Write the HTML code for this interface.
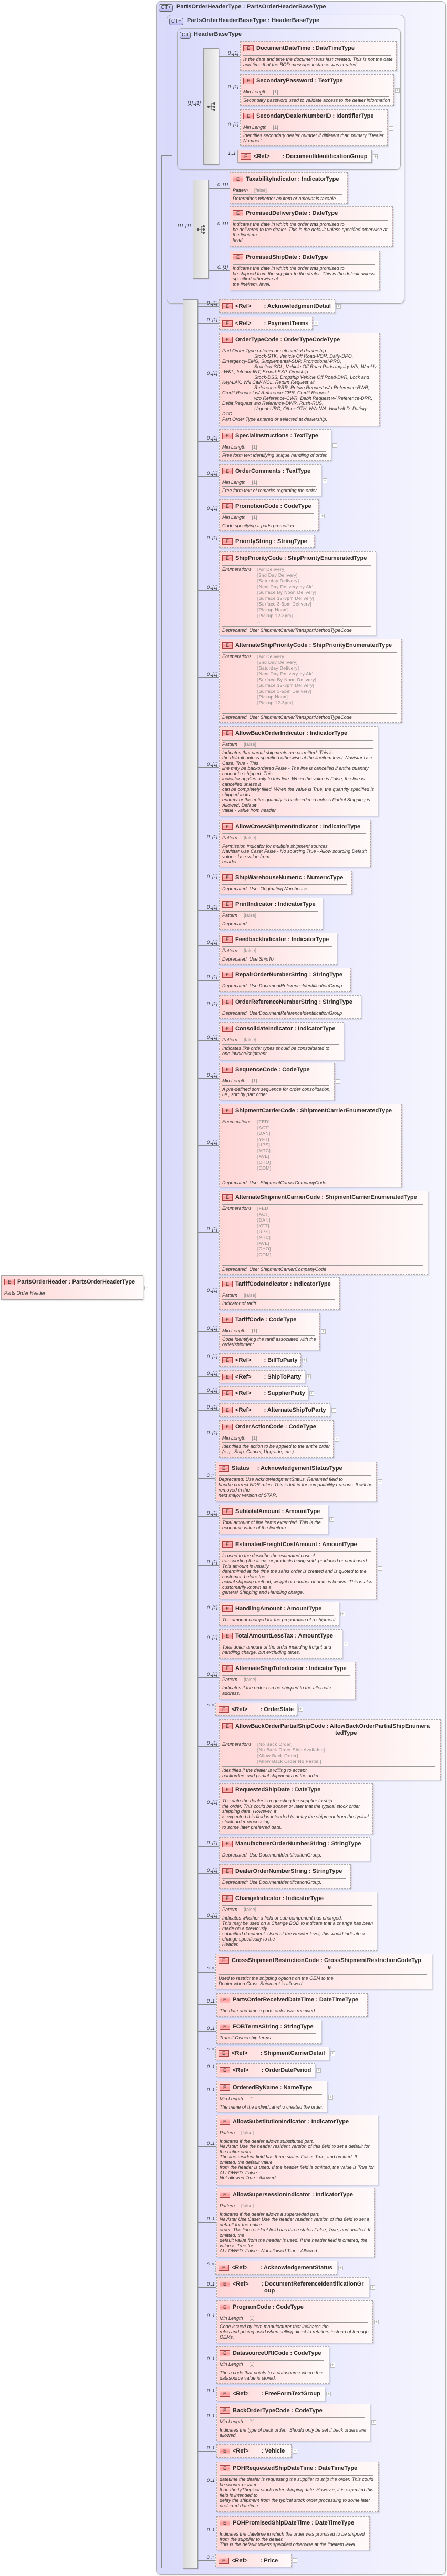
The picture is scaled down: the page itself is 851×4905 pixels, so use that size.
<!DOCTYPE html>
<html><head><meta charset="utf-8">
<style>
body{margin:0;width:851px;height:4905px;position:relative;background:#fff;font-family:"Liberation Sans",Arial,sans-serif;overflow:hidden;color:#222}
.box{position:absolute;box-sizing:border-box;border:1px solid #b0b0b0;border-radius:9px;background:linear-gradient(90deg,#d9d9fb 0%,#e6e6fd 45%,#f6f6ff 100%);box-shadow:1px 1px 2px rgba(0,0,0,.15)}
.ctb{position:absolute;box-sizing:border-box;height:14px;border:1px solid #666;border-radius:4px;background:linear-gradient(#e4e4ff,#b8b8f0);font:10px/12px "Liberation Sans",sans-serif;padding:0 3px;color:#333}
.ctt{position:absolute;font:bold 11px/13px "Liberation Sans",sans-serif;color:#333;white-space:nowrap;letter-spacing:.2px}
.b{position:absolute;box-sizing:border-box;border:1px dashed #a9a9a9;background:linear-gradient(90deg,#ffd6d6 0%,#ffe6e6 45%,#fffafa 100%);box-shadow:2px 2px 2px rgba(0,0,0,.13);overflow:hidden}
.b.s{border-style:solid}
.h{position:relative;height:25px;padding:6px 0 0 30px;box-sizing:border-box;font:bold 11px/13px "Liberation Sans",sans-serif;white-space:nowrap;color:#2a2a2a}
.h2{height:38px}
.e{position:absolute;left:5px;top:6px;width:20px;height:12px;box-sizing:border-box;border:1px solid #a44;background:linear-gradient(#fcc,#f99 55%,#fbb);font:normal 9px/10px "Liberation Sans",sans-serif;text-align:center;color:#333}
.rf{display:inline-block;width:24px}
.r{margin:0 9px 0 5px;border-top:1px solid #999;font:italic 9px/10px "Liberation Sans",sans-serif;padding:2px 0 3px;white-space:nowrap;color:#333}
.r i{font-style:normal;color:#888;margin-left:12px}
.in{padding-left:61px}
.en{display:flex}
.en b{font-weight:normal;width:67px}
.en span{font:normal 8.5px/11px "Liberation Sans",sans-serif;color:#888;letter-spacing:.4px}
.c{position:absolute;height:1px;background:#8a8a8a}
.v{position:absolute;width:1px;background:#8a8a8a}
.k{position:absolute;font:italic 9px/10px "Liberation Sans",sans-serif;width:37px;text-align:right;color:#333}
.p{position:absolute;box-sizing:border-box;width:9px;height:9px;border:1px solid #bbb;background:#fff;font:9px/7px "Liberation Sans",sans-serif;color:#aaa;text-align:center}
.seq{position:absolute;box-sizing:border-box;border:1px solid #999;background:linear-gradient(90deg,#d8d8d8,#f3f3f3);box-shadow:1px 1px 1px rgba(0,0,0,.2)}
</style></head><body>

<div class="box" style="left:297px;top:2px;width:552px;height:4901px"></div>
<div class="ctb" style="left:302px;top:8px">CT+</div>
<div class="ctt" style="left:336px;top:7px">PartsOrderHeaderType : PartsOrderHeaderBaseType</div>
<div class="box" style="left:317px;top:28px;width:453px;height:550px"></div>
<div class="ctb" style="left:322px;top:34px">CT+</div>
<div class="ctt" style="left:356px;top:33px">PartsOrderHeaderBaseType : HeaderBaseType</div>
<div class="box" style="left:337px;top:54px;width:426px;height:269px"></div>
<div class="ctb" style="left:342px;top:60px">CT</div>
<div class="ctt" style="left:369px;top:59px">HeaderBaseType</div>

<div class="v" style="left:307px;top:296px;height:4594px"></div>
<div class="c" style="left:307px;top:296px;width:20px"></div>
<div class="v" style="left:327px;top:188px;height:250px"></div>
<div class="c" style="left:327px;top:188px;width:10px"></div>
<div class="c" style="left:337px;top:203px;width:50px"></div>
<div class="k" style="left:345px;top:191px">[1]..[1]</div>
<div class="c" style="left:327px;top:437px;width:40px"></div>
<div class="k" style="left:326px;top:425px">[1]..[1]</div>
<div class="c" style="left:307px;top:2730px;width:41px"></div>

<div class="seq" style="left:387px;top:92px;width:30px;height:222px"></div>
<svg style="position:absolute;left:394px;top:194px" width="18" height="18"><g fill="#555" stroke="#555"><circle cx="3" cy="9" r="1.6"/><line x1="3" y1="9" x2="9" y2="9"/><line x1="9" y1="3" x2="9" y2="15"/><line x1="9" y1="3" x2="14" y2="3"/><line x1="9" y1="9" x2="14" y2="9"/><line x1="9" y1="15" x2="14" y2="15"/><circle cx="14" cy="3" r="1.6"/><circle cx="14" cy="9" r="1.6"/><circle cx="14" cy="15" r="1.6"/></g></svg>
<div class="seq" style="left:367px;top:342px;width:30px;height:189px"></div>
<svg style="position:absolute;left:374px;top:428px" width="18" height="18"><g fill="#555" stroke="#555"><circle cx="3" cy="9" r="1.6"/><line x1="3" y1="9" x2="9" y2="9"/><line x1="9" y1="3" x2="9" y2="15"/><line x1="9" y1="3" x2="14" y2="3"/><line x1="9" y1="9" x2="14" y2="9"/><line x1="9" y1="15" x2="14" y2="15"/><circle cx="14" cy="3" r="1.6"/><circle cx="14" cy="9" r="1.6"/><circle cx="14" cy="15" r="1.6"/></g></svg>
<div class="seq" style="left:348px;top:570px;width:29px;height:4321px"></div>

<div class="b s" style="left:2px;top:2428px;width:271px;height:47px"><div class="h"><span class="e">E</span>PartsOrderHeader : PartsOrderHeaderType</div><div class="r">Parts Order Header</div></div>
<div class="p" style="left:275px;top:2448px">−</div>
<div class="c" style="left:284px;top:2452px;width:13px"></div>

<div class="c" style="left:417px;top:107px;width:40px"></div><div class="k" style="left:417px;top:96px">0..[1]</div>
<div class="b" style="left:457px;top:79px;width:298px;height:56px"><div class="h"><span class="e">E</span>DocumentDateTime : DateTimeType</div><div class="r">Is the date and time the document was last created. This is not the date<br>and time that the BOD message instance was created.</div></div>

<div class="c" style="left:417px;top:171px;width:40px"></div><div class="k" style="left:417px;top:160px">0..[1]</div>
<div class="b" style="left:457px;top:141px;width:293px;height:60px"><div class="h"><span class="e">E</span>SecondaryPassword : TextType</div><div class="r">Min Length<i>[1]</i></div><div class="r">Secondary password used to validate access to the dealer information</div></div>
<div class="p" style="left:752px;top:168px">+</div>

<div class="c" style="left:417px;top:243px;width:40px"></div><div class="k" style="left:417px;top:232px">0..[1]</div>
<div class="b" style="left:457px;top:208px;width:281px;height:70px"><div class="h"><span class="e">E</span>SecondaryDealerNumberID : IdentifierType</div><div class="r">Min Length<i>[1]</i></div><div class="r">Identifies secondary dealer number if different than primary "Dealer<br>Number"</div></div>
<div class="p" style="left:740px;top:240px">+</div>

<div class="c" style="left:417px;top:298px;width:35px"></div><div class="k" style="left:412px;top:287px">1..1</div>
<div class="b s" style="left:452px;top:285px;width:256px;height:25px"><div class="h"><span class="e">E</span>&lt;Ref&gt;<span class="rf"></span>: DocumentIdentificationGroup</div></div>
<div class="p" style="left:710px;top:294px">+</div>

<div class="c" style="left:397px;top:358px;width:40px"></div><div class="k" style="left:397px;top:347px">0..[1]</div>
<div class="b" style="left:437px;top:328px;width:225px;height:60px"><div class="h"><span class="e">E</span>TaxabilityIndicator : IndicatorType</div><div class="r">Pattern<i>[false]</i></div><div class="r">Determines whether an item or amount is taxable.</div></div>

<div class="c" style="left:397px;top:432px;width:40px"></div><div class="k" style="left:397px;top:421px">0..[1]</div>
<div class="b" style="left:437px;top:393px;width:311px;height:77px"><div class="h"><span class="e">E</span>PromisedDeliveryDate : DateType</div><div class="r">Indicates the date in which the order was promised to<br>be delivered to the dealer. This is the default unless specified otherwise at<br>the lineitem<br>level.</div></div>

<div class="c" style="left:397px;top:515px;width:40px"></div><div class="k" style="left:397px;top:504px">0..[1]</div>
<div class="b" style="left:437px;top:477px;width:286px;height:76px"><div class="h"><span class="e">E</span>PromisedShipDate : DateType</div><div class="r">Indicates the date in which the order was promised to<br>be shipped from the supplier to the dealer. This is the default unless<br>specified otherwise at<br>the lineitem. level.</div></div>

<div class="c" style="left:377px;top:583px;width:40px"></div><div class="k" style="left:377px;top:572px">0..[1]</div>
<div class="b" style="left:417px;top:570px;width:221px;height:26px"><div class="h"><span class="e">E</span>&lt;Ref&gt;<span class="rf"></span>: AcknowledgmentDetail</div></div><div class="p" style="left:640px;top:579px">+</div>

<div class="c" style="left:377px;top:615px;width:40px"></div><div class="k" style="left:377px;top:604px">0..[1]</div>
<div class="b" style="left:417px;top:603px;width:178px;height:25px"><div class="h"><span class="e">E</span>&lt;Ref&gt;<span class="rf"></span>: PaymentTerms</div></div><div class="p" style="left:597px;top:611px">+</div>

<div class="c" style="left:377px;top:717px;width:40px"></div><div class="k" style="left:377px;top:706px">0..[1]</div>
<div class="b" style="left:417px;top:634px;width:306px;height:178px"><div class="h"><span class="e">E</span>OrderTypeCode : OrderTypeCodeType</div><div class="r">Part Order Type entered or selected at dealership.<div class="in">Stock-STK, Vehicle Off Road-VOR, Daily-DPO,</div>Emergency-EMG, Supplemental-SUP, Promotional-PRO,<div class="in">Solicited-SOL, Vehicle Off Road Parts Inquiry-VPI, Weekly</div>-WKL, Interim-INT, Export-EXP, Dropship<div class="in">Stock-DSS, Dropship Vehicle Off Road-DVR, Lock and</div>Key-LAK, Will Call-WCL, Return Request w/<div class="in">Reference-RRR, Return Request w/o Reference-RWR,</div>Credit Request w/ Reference-CRR, Credit Request<div class="in">w/o Reference-CWR, Debit Request w/ Reference-DRR,</div>Debit Request w/o Reference-DWR, Rush-RUS,<div class="in">Urgent-URG, Other-OTH, N/A-N/A, Hold-HLD, Dating-</div>DTG.<br>Part Order Type entered or selected at dealership.</div></div>

<div class="c" style="left:377px;top:840px;width:40px"></div><div class="k" style="left:377px;top:829px">0..[1]</div>
<div class="b" style="left:417px;top:817px;width:214px;height:60px"><div class="h"><span class="e">E</span>SpecialInstructions : TextType</div><div class="r">Min Length<i>[1]</i></div><div class="r">Free form text identifying unique handling of order.</div></div><div class="p" style="left:633px;top:844px">+</div>

<div class="c" style="left:377px;top:907px;width:40px"></div><div class="k" style="left:377px;top:896px">0..[1]</div>
<div class="b" style="left:417px;top:884px;width:195px;height:61px"><div class="h"><span class="e">E</span>OrderComments : TextType</div><div class="r">Min Length<i>[1]</i></div><div class="r">Free form text of remarks regarding the order.</div></div><div class="p" style="left:614px;top:911px">+</div>

<div class="c" style="left:377px;top:974px;width:40px"></div><div class="k" style="left:377px;top:963px">0..[1]</div>
<div class="b" style="left:417px;top:951px;width:190px;height:60px"><div class="h"><span class="e">E</span>PromotionCode : CodeType</div><div class="r">Min Length<i>[1]</i></div><div class="r">Code specifying a parts promotion.</div></div><div class="p" style="left:609px;top:978px">+</div>

<div class="c" style="left:377px;top:1030px;width:40px"></div><div class="k" style="left:377px;top:1019px">0..[1]</div>
<div class="b" style="left:417px;top:1018px;width:182px;height:25px"><div class="h"><span class="e">E</span>PriorityString : StringType</div></div>

<div class="c" style="left:377px;top:1124px;width:40px"></div><div class="k" style="left:377px;top:1113px">0..[1]</div>
<div class="b" style="left:417px;top:1050px;width:299px;height:160px"><div class="h"><span class="e">E</span>ShipPriorityCode : ShipPriorityEnumeratedType</div><div class="r en"><b>Enumerations</b><span>[Air Delivery]<br>[2nd Day Delivery]<br>[Saturday Delivery]<br>[Next Day Delivery by Air]<br>[Surface By Noon Delivery]<br>[Surface 12-3pm Delivery]<br>[Surface 3-5pm Delivery]<br>[Pickup Noon]<br>[Pickup 12-3pm]<br>...</span></div><div class="r">Deprecated. Use: ShipmentCarrierTransportMethodTypeCode</div></div>

<div class="c" style="left:377px;top:1290px;width:40px"></div><div class="k" style="left:377px;top:1279px">0..[1]</div>
<div class="b" style="left:417px;top:1216px;width:348px;height:160px"><div class="h"><span class="e">E</span>AlternateShipPriorityCode : ShipPriorityEnumeratedType</div><div class="r en"><b>Enumerations</b><span>[Air Delivery]<br>[2nd Day Delivery]<br>[Saturday Delivery]<br>[Next Day Delivery by Air]<br>[Surface By Noon Delivery]<br>[Surface 12-3pm Delivery]<br>[Surface 3-5pm Delivery]<br>[Pickup Noon]<br>[Pickup 12-3pm]<br>...</span></div><div class="r">Deprecated. Use: ShipmentCarrierTransportMethodTypeCode</div></div>

<div class="c" style="left:377px;top:1461px;width:40px"></div><div class="k" style="left:377px;top:1450px">0..[1]</div>
<div class="b" style="left:417px;top:1383px;width:303px;height:171px"><div class="h"><span class="e">E</span>AllowBackOrderIndicator : IndicatorType</div><div class="r">Pattern<i>[false]</i></div><div class="r">Indicates that partial shipments are permitted. This is<br>the default unless specified otherwise at the lineitem level. Navistar Use<br>Case: True - This<br>line may be backordered False - The line is cancelled if entire quantity<br>cannot be shipped. This<br>indicator applies only to this line. When the value is False, the line is<br>cancelled unless it<br>can be completely filled. When the value is True, the quantity specified is<br>shipped in its<br>entirety or the entire quantity is back-ordered unless Partial Shipping is<br>Allowed. Default<br>value - value from header</div></div>

<div class="c" style="left:377px;top:1599px;width:40px"></div><div class="k" style="left:377px;top:1588px">0..[1]</div>
<div class="b" style="left:417px;top:1561px;width:289px;height:90px"><div class="h"><span class="e">E</span>AllowCrossShipmentIndicator : IndicatorType</div><div class="r">Pattern<i>[false]</i></div><div class="r">Permission indicator for multiple shipment sources.<br>Navistar Use Case: False - No sourcing True - Allow sourcing Default<br>value - Use value from<br>header</div></div>

<div class="c" style="left:377px;top:1675px;width:40px"></div><div class="k" style="left:377px;top:1664px">0..[1]</div>
<div class="b" style="left:417px;top:1658px;width:253px;height:45px"><div class="h"><span class="e">E</span>ShipWarehouseNumeric : NumericType</div><div class="r">Deprecated. Use: OriginatingWarehouse</div></div>

<div class="c" style="left:377px;top:1733px;width:40px"></div><div class="k" style="left:377px;top:1722px">0..[1]</div>
<div class="b" style="left:417px;top:1709px;width:198px;height:61px"><div class="h"><span class="e">E</span>PrintIndicator : IndicatorType</div><div class="r">Pattern<i>[false]</i></div><div class="r">Deprecated</div></div>

<div class="c" style="left:377px;top:1800px;width:40px"></div><div class="k" style="left:377px;top:1789px">0..[1]</div>
<div class="b" style="left:417px;top:1776px;width:225px;height:61px"><div class="h"><span class="e">E</span>FeedbackIndicator : IndicatorType</div><div class="r">Pattern<i>[false]</i></div><div class="r">Deprecated. Use:ShipTo</div></div>

<div class="c" style="left:377px;top:1866px;width:40px"></div><div class="k" style="left:377px;top:1855px">0..[1]</div>
<div class="b" style="left:417px;top:1843px;width:251px;height:45px"><div class="h"><span class="e">E</span>RepairOrderNumberString : StringType</div><div class="r">Deprecated. Use:DocumentReferenceIdentificationGroup</div></div>

<div class="c" style="left:377px;top:1917px;width:40px"></div><div class="k" style="left:377px;top:1906px">0..[1]</div>
<div class="b" style="left:417px;top:1895px;width:271px;height:45px"><div class="h"><span class="e">E</span>OrderReferenceNumberString : StringType</div><div class="r">Deprecated. Use:DocumentReferenceIdentificationGroup</div></div>

<div class="c" style="left:377px;top:1981px;width:40px"></div><div class="k" style="left:377px;top:1970px">0..[1]</div>
<div class="b" style="left:417px;top:1946px;width:238px;height:73px"><div class="h"><span class="e">E</span>ConsolidateIndicator : IndicatorType</div><div class="r">Pattern<i>[false]</i></div><div class="r">Indicates like order types should be consolidated to<br>one invoice/shipment.</div></div>

<div class="c" style="left:377px;top:2053px;width:40px"></div><div class="k" style="left:377px;top:2042px">0..[1]</div>
<div class="b" style="left:417px;top:2024px;width:220px;height:71px"><div class="h"><span class="e">E</span>SequenceCode : CodeType</div><div class="r">Min Length<i>[1]</i></div><div class="r">A pre-defined sort sequence for order consolidation,<br>i.e., sort by part order.</div></div><div class="p" style="left:639px;top:2055px">+</div>

<div class="c" style="left:377px;top:2181px;width:40px"></div><div class="k" style="left:377px;top:2170px">0..[1]</div>
<div class="b" style="left:417px;top:2102px;width:348px;height:159px"><div class="h"><span class="e">E</span>ShipmentCarrierCode : ShipmentCarrierEnumeratedType</div><div class="r en"><b>Enumerations</b><span>[FED]<br>[ACT]<br>[DAN]<br>[YFT]<br>[UPS]<br>[MTC]<br>[AVE]<br>[CHO]<br>[COM]<br>...</span></div><div class="r">Deprecated. Use: ShipmentCarrierCompanyCode</div></div>

<div class="c" style="left:377px;top:2346px;width:40px"></div><div class="k" style="left:377px;top:2335px">0..[1]</div>
<div class="b" style="left:417px;top:2267px;width:398px;height:160px"><div class="h"><span class="e">E</span>AlternateShipmentCarrierCode : ShipmentCarrierEnumeratedType</div><div class="r en"><b>Enumerations</b><span>[FED]<br>[ACT]<br>[DAN]<br>[YFT]<br>[UPS]<br>[MTC]<br>[AVE]<br>[CHO]<br>[COM]<br>...</span></div><div class="r">Deprecated. Use: ShipmentCarrierCompanyCode</div></div>

<div class="c" style="left:377px;top:2463px;width:40px"></div><div class="k" style="left:377px;top:2452px">0..[1]</div>
<div class="b" style="left:417px;top:2432px;width:230px;height:62px"><div class="h"><span class="e">E</span>TariffCodeIndicator : IndicatorType</div><div class="r">Pattern<i>[false]</i></div><div class="r">Indicator of tariff.</div></div>

<div class="c" style="left:377px;top:2535px;width:40px"></div><div class="k" style="left:377px;top:2524px">0..[1]</div>
<div class="b" style="left:417px;top:2500px;width:192px;height:71px"><div class="h"><span class="e">E</span>TariffCode : CodeType</div><div class="r">Min Length<i>[1]</i></div><div class="r">Code identifying the tariff associated with the<br>order/shipment.</div></div><div class="p" style="left:611px;top:2531px">+</div>

<div class="c" style="left:377px;top:2589px;width:40px"></div><div class="k" style="left:377px;top:2578px">0..[1]</div>
<div class="b" style="left:417px;top:2577px;width:156px;height:25px"><div class="h"><span class="e">E</span>&lt;Ref&gt;<span class="rf"></span>: BillToParty</div></div><div class="p" style="left:575px;top:2585px">+</div>

<div class="c" style="left:377px;top:2621px;width:40px"></div><div class="k" style="left:377px;top:2610px">0..[1]</div>
<div class="b" style="left:417px;top:2609px;width:164px;height:25px"><div class="h"><span class="e">E</span>&lt;Ref&gt;<span class="rf"></span>: ShipToParty</div></div><div class="p" style="left:583px;top:2617px">+</div>

<div class="c" style="left:377px;top:2653px;width:40px"></div><div class="k" style="left:377px;top:2642px">0..[1]</div>
<div class="b" style="left:417px;top:2640px;width:170px;height:26px"><div class="h"><span class="e">E</span>&lt;Ref&gt;<span class="rf"></span>: SupplierParty</div></div><div class="p" style="left:589px;top:2649px">+</div>

<div class="c" style="left:377px;top:2685px;width:40px"></div><div class="k" style="left:377px;top:2674px">0..[1]</div>
<div class="b" style="left:417px;top:2672px;width:212px;height:26px"><div class="h"><span class="e">E</span>&lt;Ref&gt;<span class="rf"></span>: AlternateShipToParty</div></div><div class="p" style="left:631px;top:2681px">+</div>

<div class="c" style="left:377px;top:2734px;width:40px"></div><div class="k" style="left:377px;top:2723px">0..[1]</div>
<div class="b" style="left:417px;top:2704px;width:218px;height:72px"><div class="h"><span class="e">E</span>OrderActionCode : CodeType</div><div class="r">Min Length<i>[1]</i></div><div class="r">Identifies the action to be applied to the entire order<br>(e.g., Ship, Cancel, Upgrade, etc.)</div></div><div class="p" style="left:637px;top:2736px">+</div>

<div class="c" style="left:377px;top:2815px;width:33px"></div><div class="k" style="left:370px;top:2804px">0..*</div>
<div class="b" style="left:410px;top:2783px;width:307px;height:76px"><div class="h"><span class="e">E</span>Status <span style="display:inline-block;width:12px"></span>: AcknowledgementStatusType</div><div class="r">Deprecated: Use AcknowledgmentStatus. Renamed field to<br>handle correct NDR rules. This is left in for compatibility reasons. It will be<br>removed in the<br>next major version of STAR.</div></div><div class="p" style="left:719px;top:2817px">+</div>

<div class="c" style="left:377px;top:2887px;width:40px"></div><div class="k" style="left:377px;top:2876px">0..[1]</div>
<div class="b" style="left:417px;top:2865px;width:208px;height:56px"><div class="h"><span class="e">E</span>SubtotalAmount : AmountType</div><div class="r">Total amount of line items extended. This is the<br>economic value of the lineitem.</div></div><div class="p" style="left:627px;top:2889px">+</div>

<div class="c" style="left:377px;top:2980px;width:40px"></div><div class="k" style="left:377px;top:2969px">0..[1]</div>
<div class="b" style="left:417px;top:2928px;width:300px;height:117px"><div class="h"><span class="e">E</span>EstimatedFreightCostAmount : AmountType</div><div class="r">Is used to the describe the estimated cost of<br>transporting the items or products being sold, produced or purchased.<br>This amount is usually<br>determined at the time the sales order is created and is quoted to the<br>customer, before the<br>actual shipping method, weight or number of units is known. This is also<br>customarily known as a<br>general Shipping and Handling charge.</div></div><div class="p" style="left:719px;top:2982px">+</div>

<div class="c" style="left:377px;top:3067px;width:40px"></div><div class="k" style="left:377px;top:3056px">0..[1]</div>
<div class="b" style="left:417px;top:3050px;width:229px;height:46px"><div class="h"><span class="e">E</span>HandlingAmount : AmountType</div><div class="r">The amount charged for the preparation of a shipment</div></div><div class="p" style="left:648px;top:3069px">+</div>

<div class="c" style="left:377px;top:3124px;width:40px"></div><div class="k" style="left:377px;top:3113px">0..[1]</div>
<div class="b" style="left:417px;top:3102px;width:235px;height:56px"><div class="h"><span class="e">E</span>TotalAmountLessTax : AmountType</div><div class="r">Total dollar amount of the order including freight and<br>handling charge, but excluding taxes.</div></div><div class="p" style="left:654px;top:3126px">+</div>

<div class="c" style="left:377px;top:3194px;width:40px"></div><div class="k" style="left:377px;top:3183px">0..[1]</div>
<div class="b" style="left:417px;top:3164px;width:260px;height:72px"><div class="h"><span class="e">E</span>AlternateShipToIndicator : IndicatorType</div><div class="r">Pattern<i>[false]</i></div><div class="r">Indicates if the order can be shipped to the alternate<br>address.</div></div>

<div class="c" style="left:377px;top:3254px;width:33px"></div><div class="k" style="left:370px;top:3243px">0..*</div>
<div class="b" style="left:410px;top:3242px;width:156px;height:25px"><div class="h"><span class="e">E</span>&lt;Ref&gt;<span class="rf"></span>: OrderState</div></div><div class="p" style="left:568px;top:3250px">+</div>

<div class="c" style="left:377px;top:3325px;width:40px"></div><div class="k" style="left:377px;top:3314px">0..[1]</div>
<div class="b" style="left:417px;top:3274px;width:422px;height:116px"><div class="h h2"><span class="e">E</span>AllowBackOrderPartialShipCode : AllowBackOrderPartialShipEnumera<br><span style="padding-left:190px">tedType</span></div><div class="r en"><b>Enumerations</b><span>[No Back Order]<br>[No Back Order Ship Available]<br>[Allow Back Order]<br>[Allow Back Order No Partial]</span></div><div class="r">Identifies if the dealer is willing to accept<br>backorders and partial shipments on the order.</div></div>

<div class="c" style="left:377px;top:3438px;width:40px"></div><div class="k" style="left:377px;top:3427px">0..[1]</div>
<div class="b" style="left:417px;top:3395px;width:293px;height:98px"><div class="h"><span class="e">E</span>RequestedShipDate : DateType</div><div class="r">The date the dealer is requesting the supplier to ship<br>the order. This could be sooner or later that the typical stock order<br>shipping date. However, it<br>is expected this field is intended to delay the shipment from the typical<br>stock order processing<br>to some later preferred date.</div></div>

<div class="c" style="left:377px;top:3515px;width:40px"></div><div class="k" style="left:377px;top:3504px">0..[1]</div>
<div class="b" style="left:417px;top:3498px;width:288px;height:46px"><div class="h"><span class="e">E</span>ManufacturerOrderNumberString : StringType</div><div class="r">Deprecated: Use DocumentIdentificationGroup.</div></div>

<div class="c" style="left:377px;top:3567px;width:40px"></div><div class="k" style="left:377px;top:3556px">0..[1]</div>
<div class="b" style="left:417px;top:3550px;width:251px;height:46px"><div class="h"><span class="e">E</span>DealerOrderNumberString : StringType</div><div class="r">Deprecated: Use DocumentIdentificationGroup.</div></div>

<div class="c" style="left:377px;top:3653px;width:40px"></div><div class="k" style="left:377px;top:3642px">0..[1]</div>
<div class="b" style="left:417px;top:3602px;width:301px;height:112px"><div class="h"><span class="e">E</span>ChangeIndicator : IndicatorType</div><div class="r">Pattern<i>[false]</i></div><div class="r">Indicates whether a field or sub-component has changed.<br>This may be used on a Change BOD to indicate that a change has been<br>made on a previously<br>submitted document. Used at the Header level, this would indicate a<br>change specifically to the<br>Header.</div></div>

<div class="c" style="left:377px;top:3755px;width:33px"></div><div class="k" style="left:370px;top:3744px">0..*</div>
<div class="b" style="left:410px;top:3720px;width:413px;height:68px"><div class="h h2"><span class="e">E</span>CrossShipmentRestrictionCode : CrossShipmentRestrictionCodeTyp<br><span style="padding-left:183px">e</span></div><div class="r">Used to restrict the shipping options on the OEM to the<br>Dealer when Cross Shipment is allowed.</div></div>

<div class="c" style="left:377px;top:3816px;width:35px"></div><div class="k" style="left:372px;top:3805px">0..1</div>
<div class="b" style="left:412px;top:3795px;width:288px;height:45px"><div class="h"><span class="e">E</span>PartsOrderReceivedDateTime : DateTimeType</div><div class="r">The date and time a parts order was received.</div></div>

<div class="c" style="left:377px;top:3868px;width:35px"></div><div class="k" style="left:372px;top:3857px">0..1</div>
<div class="b" style="left:412px;top:3846px;width:200px;height:46px"><div class="h"><span class="e">E</span>FOBTermsString : StringType</div><div class="r">Transit Ownership terms</div></div>

<div class="c" style="left:377px;top:3909px;width:33px"></div><div class="k" style="left:370px;top:3898px">0..*</div>
<div class="b" style="left:410px;top:3897px;width:217px;height:26px"><div class="h"><span class="e">E</span>&lt;Ref&gt;<span class="rf"></span>: ShipmentCarrierDetail</div></div><div class="p" style="left:629px;top:3906px">+</div>

<div class="c" style="left:377px;top:3941px;width:35px"></div><div class="k" style="left:372px;top:3930px">0..1</div>
<div class="b" style="left:412px;top:3929px;width:188px;height:26px"><div class="h"><span class="e">E</span>&lt;Ref&gt;<span class="rf"></span>: OrderDatePeriod</div></div><div class="p" style="left:602px;top:3938px">+</div>

<div class="c" style="left:377px;top:3985px;width:35px"></div><div class="k" style="left:372px;top:3974px">0..1</div>
<div class="b" style="left:412px;top:3962px;width:211px;height:60px"><div class="h"><span class="e">E</span>OrderedByName : NameType</div><div class="r">Min Length<i>[1]</i></div><div class="r">The name of the individual who created the order.</div></div><div class="p" style="left:625px;top:3989px">+</div>

<div class="c" style="left:377px;top:4087px;width:35px"></div><div class="k" style="left:372px;top:4076px">0..1</div>
<div class="b" style="left:412px;top:4027px;width:308px;height:134px"><div class="h"><span class="e">E</span>AllowSubstitutionIndicator : IndicatorType</div><div class="r">Pattern<i>[false]</i></div><div class="r">Indicates if the dealer allows substituted part.<br>Navistar: Use the header resident version of this field to set a default for<br>the entire order.<br>The line resident field has three states False, True, and omitted. If<br>omitted, the default value<br>from the header is used. If the header field is omitted, the value is True for<br>ALLOWED. False -<br>Not allowed True - Allowed</div></div>

<div class="c" style="left:377px;top:4231px;width:35px"></div><div class="k" style="left:372px;top:4220px">0..1</div>
<div class="b" style="left:412px;top:4166px;width:301px;height:132px"><div class="h"><span class="e">E</span>AllowSupersessionIndicator : IndicatorType</div><div class="r">Pattern<i>[false]</i></div><div class="r">Indicates if the dealer allows a superseded part.<br>Navistar Use Case: Use the header resident version of this field to set a<br>default for the entire<br>order. The line resident field has three states False, True, and omitted. If<br>omitted, the<br>default value from the header is used. If the header field is omitted, the<br>value is True for<br>ALLOWED. False - Not allowed True - Allowed</div></div>

<div class="c" style="left:377px;top:4318px;width:33px"></div><div class="k" style="left:370px;top:4307px">0..*</div>
<div class="b" style="left:410px;top:4305px;width:232px;height:26px"><div class="h"><span class="e">E</span>&lt;Ref&gt;<span class="rf"></span>: AcknowledgementStatus</div></div><div class="p" style="left:644px;top:4314px">+</div>

<div class="c" style="left:377px;top:4355px;width:35px"></div><div class="k" style="left:372px;top:4344px">0..1</div>
<div class="b" style="left:412px;top:4336px;width:291px;height:38px"><div class="h h2"><span class="e">E</span>&lt;Ref&gt;<span class="rf"></span>: DocumentReferenceIdentificationGr<br><span style="padding-left:60px">oup</span></div></div><div class="p" style="left:705px;top:4351px">+</div>

<div class="c" style="left:377px;top:4415px;width:35px"></div><div class="k" style="left:372px;top:4404px">0..1</div>
<div class="b" style="left:412px;top:4380px;width:298px;height:82px"><div class="h"><span class="e">E</span>ProgramCode : CodeType</div><div class="r">Min Length<i>[1]</i></div><div class="r">Code issued by item manufacturer that indicates the<br>rules and pricing used when selling direct to retailers instead of through<br>OEMs.</div></div><div class="p" style="left:712px;top:4417px">+</div>

<div class="c" style="left:377px;top:4497px;width:35px"></div><div class="k" style="left:372px;top:4486px">0..1</div>
<div class="b" style="left:412px;top:4468px;width:215px;height:71px"><div class="h"><span class="e">E</span>DatasourceURICode : CodeType</div><div class="r">Min Length<i>[1]</i></div><div class="r">The a code that points to a datasource where the<br>datasource value is stored.</div></div><div class="p" style="left:629px;top:4499px">+</div>

<div class="c" style="left:377px;top:4558px;width:35px"></div><div class="k" style="left:372px;top:4547px">0..1</div>
<div class="b" style="left:412px;top:4545px;width:207px;height:27px"><div class="h"><span class="e">E</span>&lt;Ref&gt;<span class="rf"></span>: FreeFormTextGroup</div></div><div class="p" style="left:621px;top:4554px">+</div>

<div class="c" style="left:377px;top:4606px;width:35px"></div><div class="k" style="left:372px;top:4595px">0..1</div>
<div class="b" style="left:412px;top:4577px;width:293px;height:71px"><div class="h"><span class="e">E</span>BackOrderTypeCode : CodeType</div><div class="r">Min Length<i>[1]</i></div><div class="r">Indicates the type of back order.&nbsp; Should only be set if back orders are<br>allowed.</div></div><div class="p" style="left:707px;top:4608px">+</div>

<div class="c" style="left:377px;top:4667px;width:35px"></div><div class="k" style="left:372px;top:4656px">0..1</div>
<div class="b" style="left:412px;top:4654px;width:143px;height:26px"><div class="h"><span class="e">E</span>&lt;Ref&gt;<span class="rf"></span>: Vehicle</div></div><div class="p" style="left:557px;top:4663px">+</div>

<div class="c" style="left:377px;top:4729px;width:35px"></div><div class="k" style="left:372px;top:4718px">0..1</div>
<div class="b" style="left:412px;top:4687px;width:309px;height:96px"><div class="h"><span class="e">E</span>POHRequestedShipDateTime : DateTimeType</div><div class="r">datetime the dealer is requesting the supplier to ship the order. This could<br>be sooner or later<br>than the tyThepical stock order shipping date. However, it is expected this<br>field is intended to<br>delay the shipment from the typical stock order processing to some later<br>preferred datetime.</div></div>

<div class="c" style="left:377px;top:4823px;width:35px"></div><div class="k" style="left:372px;top:4812px">0..1</div>
<div class="b" style="left:412px;top:4791px;width:292px;height:65px"><div class="h"><span class="e">E</span>POHPromisedShipDateTime : DateTimeType</div><div class="r">Indicates the datetime in which the order was promised to be shipped<br>from the supplier to the dealer.<br>This is the default unless specified otherwise at the lineitem level.</div></div>

<div class="c" style="left:377px;top:4875px;width:33px"></div><div class="k" style="left:370px;top:4864px">0..*</div>
<div class="b" style="left:410px;top:4863px;width:145px;height:25px"><div class="h"><span class="e">E</span>&lt;Ref&gt;<span class="rf"></span>: Price</div></div><div class="p" style="left:557px;top:4871px">+</div>

</body></html>
